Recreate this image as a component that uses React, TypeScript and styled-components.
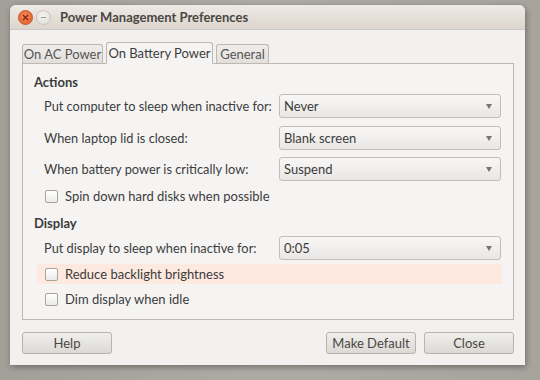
import React from "react";
import styled, { createGlobalStyle } from "styled-components";

const Global = createGlobalStyle`
  html, body { margin: 0; padding: 0; }
  body {
    width: 540px; height: 380px; overflow: hidden;
    background: #a9a69f;
    font-family: Lato, "Noto Sans", "DejaVu Sans", sans-serif;
    color: #3c3c3c;
  }
`;

const Desk = styled.div`
  width: 540px;
  height: 380px;
  padding: 5px 15px 15px 10px;
  box-sizing: border-box;
  background: linear-gradient(90deg, #a3a09a 0%, #aeaba4 50%, #a7a49e 100%);
`;

const Win = styled.div`
  width: 515px;
  height: 360px;
  background: #f2f1f0;
  border-radius: 6px 6px 0 0;
  box-shadow: 1px 2px 6px rgba(0, 0, 0, 0.35);
  display: flex;
  flex-direction: column;
  overflow: hidden;
`;

const TitleBar = styled.div`
  height: 24px;
  display: flex;
  align-items: center;
  padding-left: 8px;
  background: linear-gradient(#eeeae5, #dcd5cd);
  border-bottom: 1px solid #cfc8c0;
  gap: 3px;
`;

const Ctl = styled.div<{ $close?: boolean }>`
  width: 13px;
  height: 13px;
  border-radius: 50%;
  display: flex;
  align-items: center;
  justify-content: center;
  background: ${(p) =>
    p.$close
      ? "radial-gradient(circle at 45% 40%, #f58a5a, #e05a25)"
      : "radial-gradient(circle at 45% 40%, #f7f5f2, #dedad4)"};
  border: 1px solid ${(p) => (p.$close ? "#c8542a" : "#c9c4bd")};
`;

const Title = styled.div`
  margin-left: 6px;
  font-weight: bold;
  font-size: 13px;
  color: #4a4743;
`;

const Body = styled.div`
  flex: 1;
  padding: 11px 11px 0 12px;
  display: flex;
  flex-direction: column;
`;

const Tabs = styled.div`
  display: flex;
  align-items: flex-end;
  height: 22px;
  gap: 3px;
  position: relative;
  z-index: 1;
`;

const Tab = styled.div<{ $active?: boolean; $w: number }>`
  width: ${(p) => p.$w}px;
  height: ${(p) => (p.$active ? "22px" : "19px")};
  box-sizing: border-box;
  display: flex;
  align-items: center;
  justify-content: center;
  font-size: 13px;
  white-space: nowrap;
  border: 1px solid #bdb8b1;
  border-bottom: ${(p) => (p.$active ? "1px solid #f5f4f3" : "none")};
  border-radius: 3px 3px 0 0;
  background: ${(p) => (p.$active ? "#f5f4f3" : "linear-gradient(#efedeb, #e2dfdb)")};
  color: ${(p) => (p.$active ? "#3c3c3c" : "#555")};
  margin-bottom: ${(p) => (p.$active ? "-1px" : "0")};
`;

const Panel = styled.div`
  height: 257px;
  box-sizing: border-box;
  border: 1px solid #bdb8b1;
  background: #f5f4f3;
  padding: 8px 12px 0 11px;
  display: flex;
  flex-direction: column;
`;

const Heading = styled.div<{ $top?: number }>`
  font-weight: bold;
  font-size: 13px;
  height: 20px;
  line-height: 20px;
  margin-top: ${(p) => p.$top ?? 0}px;
`;

const Row = styled.div<{ $top: number }>`
  display: grid;
  grid-template-columns: 235px 222px;
  align-items: center;
  padding-left: 10px;
  height: 24px;
  margin-top: ${(p) => p.$top}px;
  font-size: 12.8px;
  white-space: nowrap;
`;

const Combo = styled.div`
  height: 24px;
  box-sizing: border-box;
  border: 1px solid #c2beb8;
  border-radius: 3px;
  background: linear-gradient(#f8f7f6, #e9e7e4);
  display: flex;
  align-items: center;
  justify-content: space-between;
  padding: 0 8px 0 4px;
  font-size: 13px;
  color: #3c3c3c;
`;

const Arrow = styled.span`
  width: 0;
  height: 0;
  border-left: 3.5px solid transparent;
  border-right: 3.5px solid transparent;
  border-top: 5px solid #77736e;
`;

const CheckRow = styled.div<{ $hl?: boolean; $top: number }>`
  display: flex;
  align-items: center;
  gap: 7px;
  height: 20px;
  margin-top: ${(p) => p.$top}px;
  margin-left: 3px;
  padding-left: 8px;
  width: 457px;
  font-size: 13px;
  white-space: nowrap;
  background: ${(p) => (p.$hl ? "#fde9df" : "transparent")};
`;

const Box = styled.span`
  width: 11px;
  height: 11px;
  border: 1px solid #a8a39d;
  border-radius: 2px;
  background: linear-gradient(#ffffff, #ecebe9);
`;

const Footer = styled.div`
  display: flex;
  align-items: center;
  padding-top: 12px;
  gap: 8px;
`;

const Btn = styled.div<{ $push?: boolean }>`
  width: 90px;
  height: 22px;
  box-sizing: border-box;
  border: 1px solid #b8b3ad;
  border-radius: 3px;
  background: linear-gradient(#f0efed, #dcd9d5);
  display: flex;
  align-items: center;
  justify-content: center;
  font-size: 13px;
  color: #4a4743;
  margin-left: ${(p) => (p.$push ? "auto" : "0")};
`;

const rows1: [string, string, number][] = [
  ["Put computer to sleep when inactive for:", "Never", 2],
  ["When laptop lid is closed:", "Blank screen", 8],
  ["When battery power is critically low:", "Suspend", 7],
];

export default function App() {
  return (
    <>
      <Global />
      <Desk>
        <Win>
          <TitleBar>
            <Ctl $close>
              <svg width="7" height="7" viewBox="0 0 7 7">
                <path d="M1 1L6 6M6 1L1 6" stroke="#7a2a10" strokeWidth="1.3" />
              </svg>
            </Ctl>
            <Ctl>
              <svg width="7" height="7" viewBox="0 0 7 7">
                <path d="M1 3.5H6" stroke="#9a958f" strokeWidth="1.2" />
              </svg>
            </Ctl>
            <Title>Power Management Preferences</Title>
          </TitleBar>
          <Body>
            <Tabs>
              <Tab $w={81}>On AC Power</Tab>
              <Tab $w={107} $active>On Battery Power</Tab>
              <Tab $w={53}>General</Tab>
            </Tabs>
            <Panel>
              <Heading>Actions</Heading>
              {rows1.map(([l, v, t]) => (
                <Row key={l} $top={t}>
                  <span>{l}</span>
                  <Combo>
                    {v}
                    <Arrow />
                  </Combo>
                </Row>
              ))}
              <CheckRow $top={5}>
                <Box />
                Spin down hard disks when possible
              </CheckRow>
              <Heading $top={7}>Display</Heading>
              <Row $top={3}>
                <span>Put display to sleep when inactive for:</span>
                <Combo>
                  0:05
                  <Arrow />
                </Combo>
              </Row>
              <CheckRow $hl $top={4}>
                <Box />
                Reduce backlight brightness
              </CheckRow>
              <CheckRow $top={5}>
                <Box />
                Dim display when idle
              </CheckRow>
            </Panel>
            <Footer>
              <Btn>Help</Btn>
              <Btn $push>Make Default</Btn>
              <Btn>Close</Btn>
            </Footer>
          </Body>
        </Win>
      </Desk>
    </>
  );
}
